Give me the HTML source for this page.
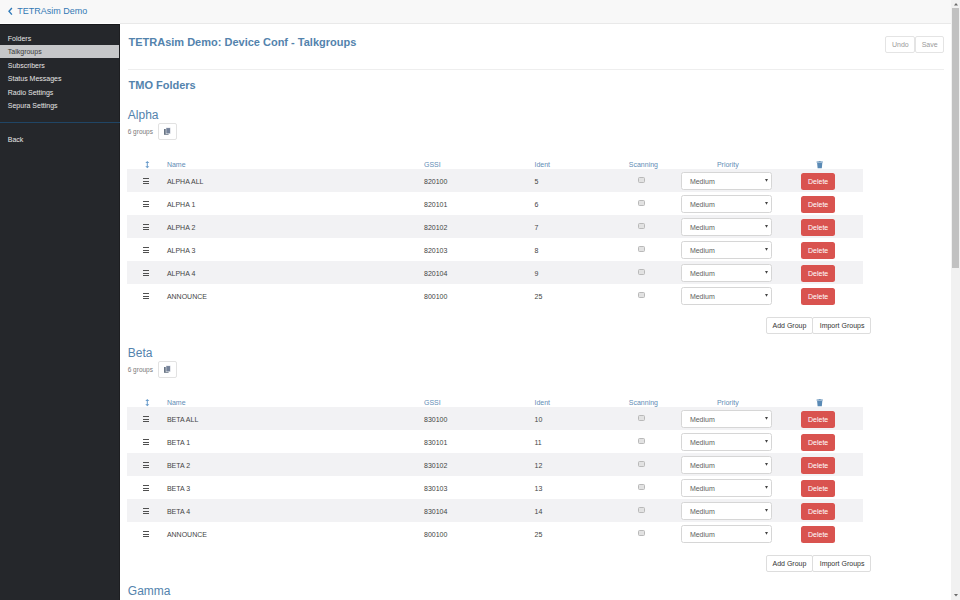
<!DOCTYPE html>
<html><head><meta charset="utf-8"><style>
html,body{margin:0;padding:0;width:960px;height:600px;overflow:hidden;background:#fff;}
body{position:relative;font-family:"Liberation Sans", sans-serif;}
.t{position:absolute;white-space:nowrap;}
.r{position:absolute;}
</style></head><body>
<div class="r" style="left:0.00px;top:0.00px;width:951.00px;height:23.00px;background:#f8f8f8"></div>
<div class="r" style="left:120.00px;top:23.00px;width:831.00px;height:1.00px;background:#e9e9e9"></div>
<svg class="r" style="left:7px;top:6.8px" width="7" height="9" viewBox="0 0 7 9"><path d="M4.9 1 L2 4.3 L4.9 7.6" stroke="#2f7ab9" stroke-width="1.4" fill="none"/></svg>
<div class="t" style="left:17.20px;top:7.38px;font-size:9px;line-height:9px;color:#3479b5;">TETRAsim Demo</div>
<div class="r" style="left:0.00px;top:24.00px;width:120.00px;height:576.00px;background:#25272b;border-top:1px solid #17181b;border-right:1px solid #1d1e21;box-sizing:border-box"></div>
<div class="t" style="left:7.80px;top:34.87px;font-size:7px;line-height:7px;color:#e6e6e6;">Folders</div>
<div class="r" style="left:0.00px;top:44.90px;width:119.00px;height:13.50px;background:#c6c7c9"></div>
<div class="t" style="left:7.80px;top:48.17px;font-size:7px;line-height:7px;color:#3a3a3a;">Talkgroups</div>
<div class="t" style="left:7.80px;top:61.87px;font-size:7px;line-height:7px;color:#e6e6e6;">Subscribers</div>
<div class="t" style="left:7.80px;top:75.37px;font-size:7px;line-height:7px;color:#e6e6e6;">Status Messages</div>
<div class="t" style="left:7.80px;top:88.87px;font-size:7px;line-height:7px;color:#e6e6e6;">Radio Settings</div>
<div class="t" style="left:7.80px;top:102.37px;font-size:7px;line-height:7px;color:#e6e6e6;">Sepura Settings</div>
<div class="r" style="left:0.00px;top:121.50px;width:120.00px;height:1.00px;background:#204565"></div>
<div class="t" style="left:7.80px;top:135.87px;font-size:7px;line-height:7px;color:#e6e6e6;">Back</div>
<div class="t" style="left:128.50px;top:36.69px;font-size:11px;line-height:11px;color:#5383ad;font-weight:bold;">TETRAsim Demo: Device Conf - Talkgroups</div>
<div class="r" style="left:885.00px;top:36.30px;width:30.00px;height:16.30px;background:#fff;border:1px solid #e4e4e4;border-radius:2px;box-sizing:border-box"></div>
<div class="t" style="left:892.00px;top:41.07px;font-size:7px;line-height:7px;color:#9a9a9a;">Undo</div>
<div class="r" style="left:914.50px;top:36.30px;width:29.10px;height:16.30px;background:#fff;border:1px solid #e4e4e4;border-radius:2px;box-sizing:border-box"></div>
<div class="t" style="left:921.70px;top:41.07px;font-size:7px;line-height:7px;color:#9a9a9a;">Save</div>
<div class="r" style="left:128.00px;top:68.50px;width:816.00px;height:1.00px;background:#eeeeee"></div>
<div class="t" style="left:128.50px;top:80.09px;font-size:11px;line-height:11px;color:#5383ad;font-weight:bold;">TMO Folders</div>
<div class="t" style="left:127.80px;top:109.04px;font-size:12px;line-height:12px;color:#5383ad;">Alpha</div>
<div class="t" style="left:127.70px;top:129.10px;font-size:6.5px;line-height:6.5px;color:#7a7a7a;">6 groups</div>
<div class="r" style="left:158.30px;top:123.20px;width:18.40px;height:16.90px;background:#fff;border:1px solid #e2e2e2;border-radius:2px;box-sizing:border-box"></div>
<svg class="r" style="left:163px;top:127px" width="9" height="9" viewBox="0 0 9 9"><rect x="1" y="2" width="4.6" height="5.8" fill="#687484"/><rect x="3" y="0.8" width="4.4" height="6" fill="#76839a" stroke="#fff" stroke-width="0.5"/></svg>
<svg class="r" style="left:145px;top:160.8px" width="5" height="8" viewBox="0 0 5 8"><path d="M2.3 0 L4.3 2.1 L2.8 2.1 L2.8 5.3 L4.3 5.3 L2.3 7.2 L0.3 5.3 L1.8 5.3 L1.8 2.1 L0.3 2.1 Z" fill="#6a9ccb"/></svg>
<div class="t" style="left:166.90px;top:161.07px;font-size:7px;line-height:7px;color:#5f8db6;">Name</div>
<div class="t" style="left:424.00px;top:161.07px;font-size:7px;line-height:7px;color:#5f8db6;">GSSI</div>
<div class="t" style="left:534.50px;top:161.07px;font-size:7px;line-height:7px;color:#5f8db6;">Ident</div>
<div class="t" style="left:628.80px;top:161.07px;font-size:7px;line-height:7px;color:#5f8db6;">Scanning</div>
<div class="t" style="left:716.90px;top:161.07px;font-size:7px;line-height:7px;color:#5f8db6;">Priority</div>
<svg class="r" style="left:816px;top:160.5px" width="7.5" height="8" viewBox="0 0 7.5 8"><rect x="0.6" y="0.5" width="6.2" height="1.1" fill="#5a8ab5"/><rect x="2.7" y="0" width="2" height="0.7" fill="#5a8ab5"/><path d="M1.1 1.9 L6.3 1.9 L5.8 7.2 L1.6 7.2 Z" fill="#5a8ab5"/></svg>
<div class="r" style="left:127.30px;top:169.00px;width:735.30px;height:23.00px;background:#f2f2f4"></div>
<div class="r" style="left:142.60px;top:178.30px;width:6.60px;height:0.90px;background:#505050"></div>
<div class="r" style="left:142.60px;top:180.80px;width:6.60px;height:0.90px;background:#505050"></div>
<div class="r" style="left:142.60px;top:183.30px;width:6.60px;height:0.90px;background:#505050"></div>
<div class="t" style="left:166.90px;top:177.67px;font-size:7px;line-height:7px;color:#444444;">ALPHA ALL</div>
<div class="t" style="left:424.00px;top:177.67px;font-size:7px;line-height:7px;color:#444444;">820100</div>
<div class="t" style="left:534.50px;top:177.67px;font-size:7px;line-height:7px;color:#444444;">5</div>
<div class="r" style="left:638.00px;top:177.40px;width:6.80px;height:5.80px;background:#e2e2e2;border:1px solid #b9b9b9;border-radius:1.5px;box-sizing:border-box"></div>
<div class="r" style="left:681.30px;top:172.10px;width:90.30px;height:17.50px;background:#fff;border:1px solid #d6d6d6;border-radius:2.5px;box-sizing:border-box"></div>
<div class="t" style="left:689.90px;top:177.67px;font-size:7px;line-height:7px;color:#606060;">Medium</div>
<svg class="r" style="left:765px;top:179.2px" width="3" height="3" viewBox="0 0 3 3"><path d="M0 0 L3 0 L1.5 2.8 Z" fill="#444"/></svg>
<div class="r" style="left:801.30px;top:173.20px;width:33.70px;height:16.70px;background:#d9534f;border-radius:2.5px"></div>
<div class="t" style="left:808.00px;top:177.67px;font-size:7px;line-height:7px;color:#fff;">Delete</div>
<div class="r" style="left:142.60px;top:201.30px;width:6.60px;height:0.90px;background:#505050"></div>
<div class="r" style="left:142.60px;top:203.80px;width:6.60px;height:0.90px;background:#505050"></div>
<div class="r" style="left:142.60px;top:206.30px;width:6.60px;height:0.90px;background:#505050"></div>
<div class="t" style="left:166.90px;top:200.67px;font-size:7px;line-height:7px;color:#444444;">ALPHA 1</div>
<div class="t" style="left:424.00px;top:200.67px;font-size:7px;line-height:7px;color:#444444;">820101</div>
<div class="t" style="left:534.50px;top:200.67px;font-size:7px;line-height:7px;color:#444444;">6</div>
<div class="r" style="left:638.00px;top:200.40px;width:6.80px;height:5.80px;background:#e2e2e2;border:1px solid #b9b9b9;border-radius:1.5px;box-sizing:border-box"></div>
<div class="r" style="left:681.30px;top:195.10px;width:90.30px;height:17.50px;background:#fff;border:1px solid #d6d6d6;border-radius:2.5px;box-sizing:border-box"></div>
<div class="t" style="left:689.90px;top:200.67px;font-size:7px;line-height:7px;color:#606060;">Medium</div>
<svg class="r" style="left:765px;top:202.2px" width="3" height="3" viewBox="0 0 3 3"><path d="M0 0 L3 0 L1.5 2.8 Z" fill="#444"/></svg>
<div class="r" style="left:801.30px;top:196.20px;width:33.70px;height:16.70px;background:#d9534f;border-radius:2.5px"></div>
<div class="t" style="left:808.00px;top:200.67px;font-size:7px;line-height:7px;color:#fff;">Delete</div>
<div class="r" style="left:127.30px;top:215.00px;width:735.30px;height:23.00px;background:#f2f2f4"></div>
<div class="r" style="left:142.60px;top:224.30px;width:6.60px;height:0.90px;background:#505050"></div>
<div class="r" style="left:142.60px;top:226.80px;width:6.60px;height:0.90px;background:#505050"></div>
<div class="r" style="left:142.60px;top:229.30px;width:6.60px;height:0.90px;background:#505050"></div>
<div class="t" style="left:166.90px;top:223.67px;font-size:7px;line-height:7px;color:#444444;">ALPHA 2</div>
<div class="t" style="left:424.00px;top:223.67px;font-size:7px;line-height:7px;color:#444444;">820102</div>
<div class="t" style="left:534.50px;top:223.67px;font-size:7px;line-height:7px;color:#444444;">7</div>
<div class="r" style="left:638.00px;top:223.40px;width:6.80px;height:5.80px;background:#e2e2e2;border:1px solid #b9b9b9;border-radius:1.5px;box-sizing:border-box"></div>
<div class="r" style="left:681.30px;top:218.10px;width:90.30px;height:17.50px;background:#fff;border:1px solid #d6d6d6;border-radius:2.5px;box-sizing:border-box"></div>
<div class="t" style="left:689.90px;top:223.67px;font-size:7px;line-height:7px;color:#606060;">Medium</div>
<svg class="r" style="left:765px;top:225.2px" width="3" height="3" viewBox="0 0 3 3"><path d="M0 0 L3 0 L1.5 2.8 Z" fill="#444"/></svg>
<div class="r" style="left:801.30px;top:219.20px;width:33.70px;height:16.70px;background:#d9534f;border-radius:2.5px"></div>
<div class="t" style="left:808.00px;top:223.67px;font-size:7px;line-height:7px;color:#fff;">Delete</div>
<div class="r" style="left:142.60px;top:247.30px;width:6.60px;height:0.90px;background:#505050"></div>
<div class="r" style="left:142.60px;top:249.80px;width:6.60px;height:0.90px;background:#505050"></div>
<div class="r" style="left:142.60px;top:252.30px;width:6.60px;height:0.90px;background:#505050"></div>
<div class="t" style="left:166.90px;top:246.67px;font-size:7px;line-height:7px;color:#444444;">ALPHA 3</div>
<div class="t" style="left:424.00px;top:246.67px;font-size:7px;line-height:7px;color:#444444;">820103</div>
<div class="t" style="left:534.50px;top:246.67px;font-size:7px;line-height:7px;color:#444444;">8</div>
<div class="r" style="left:638.00px;top:246.40px;width:6.80px;height:5.80px;background:#e2e2e2;border:1px solid #b9b9b9;border-radius:1.5px;box-sizing:border-box"></div>
<div class="r" style="left:681.30px;top:241.10px;width:90.30px;height:17.50px;background:#fff;border:1px solid #d6d6d6;border-radius:2.5px;box-sizing:border-box"></div>
<div class="t" style="left:689.90px;top:246.67px;font-size:7px;line-height:7px;color:#606060;">Medium</div>
<svg class="r" style="left:765px;top:248.2px" width="3" height="3" viewBox="0 0 3 3"><path d="M0 0 L3 0 L1.5 2.8 Z" fill="#444"/></svg>
<div class="r" style="left:801.30px;top:242.20px;width:33.70px;height:16.70px;background:#d9534f;border-radius:2.5px"></div>
<div class="t" style="left:808.00px;top:246.67px;font-size:7px;line-height:7px;color:#fff;">Delete</div>
<div class="r" style="left:127.30px;top:261.00px;width:735.30px;height:23.00px;background:#f2f2f4"></div>
<div class="r" style="left:142.60px;top:270.30px;width:6.60px;height:0.90px;background:#505050"></div>
<div class="r" style="left:142.60px;top:272.80px;width:6.60px;height:0.90px;background:#505050"></div>
<div class="r" style="left:142.60px;top:275.30px;width:6.60px;height:0.90px;background:#505050"></div>
<div class="t" style="left:166.90px;top:269.67px;font-size:7px;line-height:7px;color:#444444;">ALPHA 4</div>
<div class="t" style="left:424.00px;top:269.67px;font-size:7px;line-height:7px;color:#444444;">820104</div>
<div class="t" style="left:534.50px;top:269.67px;font-size:7px;line-height:7px;color:#444444;">9</div>
<div class="r" style="left:638.00px;top:269.40px;width:6.80px;height:5.80px;background:#e2e2e2;border:1px solid #b9b9b9;border-radius:1.5px;box-sizing:border-box"></div>
<div class="r" style="left:681.30px;top:264.10px;width:90.30px;height:17.50px;background:#fff;border:1px solid #d6d6d6;border-radius:2.5px;box-sizing:border-box"></div>
<div class="t" style="left:689.90px;top:269.67px;font-size:7px;line-height:7px;color:#606060;">Medium</div>
<svg class="r" style="left:765px;top:271.2px" width="3" height="3" viewBox="0 0 3 3"><path d="M0 0 L3 0 L1.5 2.8 Z" fill="#444"/></svg>
<div class="r" style="left:801.30px;top:265.20px;width:33.70px;height:16.70px;background:#d9534f;border-radius:2.5px"></div>
<div class="t" style="left:808.00px;top:269.67px;font-size:7px;line-height:7px;color:#fff;">Delete</div>
<div class="r" style="left:142.60px;top:293.30px;width:6.60px;height:0.90px;background:#505050"></div>
<div class="r" style="left:142.60px;top:295.80px;width:6.60px;height:0.90px;background:#505050"></div>
<div class="r" style="left:142.60px;top:298.30px;width:6.60px;height:0.90px;background:#505050"></div>
<div class="t" style="left:166.90px;top:292.67px;font-size:7px;line-height:7px;color:#444444;">ANNOUNCE</div>
<div class="t" style="left:424.00px;top:292.67px;font-size:7px;line-height:7px;color:#444444;">800100</div>
<div class="t" style="left:534.50px;top:292.67px;font-size:7px;line-height:7px;color:#444444;">25</div>
<div class="r" style="left:638.00px;top:292.40px;width:6.80px;height:5.80px;background:#e2e2e2;border:1px solid #b9b9b9;border-radius:1.5px;box-sizing:border-box"></div>
<div class="r" style="left:681.30px;top:287.10px;width:90.30px;height:17.50px;background:#fff;border:1px solid #d6d6d6;border-radius:2.5px;box-sizing:border-box"></div>
<div class="t" style="left:689.90px;top:292.67px;font-size:7px;line-height:7px;color:#606060;">Medium</div>
<svg class="r" style="left:765px;top:294.2px" width="3" height="3" viewBox="0 0 3 3"><path d="M0 0 L3 0 L1.5 2.8 Z" fill="#444"/></svg>
<div class="r" style="left:801.30px;top:288.20px;width:33.70px;height:16.70px;background:#d9534f;border-radius:2.5px"></div>
<div class="t" style="left:808.00px;top:292.67px;font-size:7px;line-height:7px;color:#fff;">Delete</div>
<div class="r" style="left:766.30px;top:317.30px;width:46.50px;height:16.70px;background:#fff;border:1px solid #ddd;border-radius:2px;box-sizing:border-box"></div>
<div class="t" style="left:772.50px;top:321.57px;font-size:7px;line-height:7px;color:#333;">Add Group</div>
<div class="r" style="left:812.20px;top:317.30px;width:58.80px;height:16.70px;background:#fff;border:1px solid #ddd;border-radius:2px;box-sizing:border-box"></div>
<div class="t" style="left:819.70px;top:321.57px;font-size:7px;line-height:7px;color:#333;">Import Groups</div>
<div class="t" style="left:127.80px;top:347.04px;font-size:12px;line-height:12px;color:#5383ad;">Beta</div>
<div class="t" style="left:127.70px;top:367.10px;font-size:6.5px;line-height:6.5px;color:#7a7a7a;">6 groups</div>
<div class="r" style="left:158.30px;top:361.20px;width:18.40px;height:16.90px;background:#fff;border:1px solid #e2e2e2;border-radius:2px;box-sizing:border-box"></div>
<svg class="r" style="left:163px;top:365px" width="9" height="9" viewBox="0 0 9 9"><rect x="1" y="2" width="4.6" height="5.8" fill="#687484"/><rect x="3" y="0.8" width="4.4" height="6" fill="#76839a" stroke="#fff" stroke-width="0.5"/></svg>
<svg class="r" style="left:145px;top:398.8px" width="5" height="8" viewBox="0 0 5 8"><path d="M2.3 0 L4.3 2.1 L2.8 2.1 L2.8 5.3 L4.3 5.3 L2.3 7.2 L0.3 5.3 L1.8 5.3 L1.8 2.1 L0.3 2.1 Z" fill="#6a9ccb"/></svg>
<div class="t" style="left:166.90px;top:399.07px;font-size:7px;line-height:7px;color:#5f8db6;">Name</div>
<div class="t" style="left:424.00px;top:399.07px;font-size:7px;line-height:7px;color:#5f8db6;">GSSI</div>
<div class="t" style="left:534.50px;top:399.07px;font-size:7px;line-height:7px;color:#5f8db6;">Ident</div>
<div class="t" style="left:628.80px;top:399.07px;font-size:7px;line-height:7px;color:#5f8db6;">Scanning</div>
<div class="t" style="left:716.90px;top:399.07px;font-size:7px;line-height:7px;color:#5f8db6;">Priority</div>
<svg class="r" style="left:816px;top:398.5px" width="7.5" height="8" viewBox="0 0 7.5 8"><rect x="0.6" y="0.5" width="6.2" height="1.1" fill="#5a8ab5"/><rect x="2.7" y="0" width="2" height="0.7" fill="#5a8ab5"/><path d="M1.1 1.9 L6.3 1.9 L5.8 7.2 L1.6 7.2 Z" fill="#5a8ab5"/></svg>
<div class="r" style="left:127.30px;top:407.00px;width:735.30px;height:23.00px;background:#f2f2f4"></div>
<div class="r" style="left:142.60px;top:416.30px;width:6.60px;height:0.90px;background:#505050"></div>
<div class="r" style="left:142.60px;top:418.80px;width:6.60px;height:0.90px;background:#505050"></div>
<div class="r" style="left:142.60px;top:421.30px;width:6.60px;height:0.90px;background:#505050"></div>
<div class="t" style="left:166.90px;top:415.67px;font-size:7px;line-height:7px;color:#444444;">BETA ALL</div>
<div class="t" style="left:424.00px;top:415.67px;font-size:7px;line-height:7px;color:#444444;">830100</div>
<div class="t" style="left:534.50px;top:415.67px;font-size:7px;line-height:7px;color:#444444;">10</div>
<div class="r" style="left:638.00px;top:415.40px;width:6.80px;height:5.80px;background:#e2e2e2;border:1px solid #b9b9b9;border-radius:1.5px;box-sizing:border-box"></div>
<div class="r" style="left:681.30px;top:410.10px;width:90.30px;height:17.50px;background:#fff;border:1px solid #d6d6d6;border-radius:2.5px;box-sizing:border-box"></div>
<div class="t" style="left:689.90px;top:415.67px;font-size:7px;line-height:7px;color:#606060;">Medium</div>
<svg class="r" style="left:765px;top:417.2px" width="3" height="3" viewBox="0 0 3 3"><path d="M0 0 L3 0 L1.5 2.8 Z" fill="#444"/></svg>
<div class="r" style="left:801.30px;top:411.20px;width:33.70px;height:16.70px;background:#d9534f;border-radius:2.5px"></div>
<div class="t" style="left:808.00px;top:415.67px;font-size:7px;line-height:7px;color:#fff;">Delete</div>
<div class="r" style="left:142.60px;top:439.30px;width:6.60px;height:0.90px;background:#505050"></div>
<div class="r" style="left:142.60px;top:441.80px;width:6.60px;height:0.90px;background:#505050"></div>
<div class="r" style="left:142.60px;top:444.30px;width:6.60px;height:0.90px;background:#505050"></div>
<div class="t" style="left:166.90px;top:438.67px;font-size:7px;line-height:7px;color:#444444;">BETA 1</div>
<div class="t" style="left:424.00px;top:438.67px;font-size:7px;line-height:7px;color:#444444;">830101</div>
<div class="t" style="left:534.50px;top:438.67px;font-size:7px;line-height:7px;color:#444444;">11</div>
<div class="r" style="left:638.00px;top:438.40px;width:6.80px;height:5.80px;background:#e2e2e2;border:1px solid #b9b9b9;border-radius:1.5px;box-sizing:border-box"></div>
<div class="r" style="left:681.30px;top:433.10px;width:90.30px;height:17.50px;background:#fff;border:1px solid #d6d6d6;border-radius:2.5px;box-sizing:border-box"></div>
<div class="t" style="left:689.90px;top:438.67px;font-size:7px;line-height:7px;color:#606060;">Medium</div>
<svg class="r" style="left:765px;top:440.2px" width="3" height="3" viewBox="0 0 3 3"><path d="M0 0 L3 0 L1.5 2.8 Z" fill="#444"/></svg>
<div class="r" style="left:801.30px;top:434.20px;width:33.70px;height:16.70px;background:#d9534f;border-radius:2.5px"></div>
<div class="t" style="left:808.00px;top:438.67px;font-size:7px;line-height:7px;color:#fff;">Delete</div>
<div class="r" style="left:127.30px;top:453.00px;width:735.30px;height:23.00px;background:#f2f2f4"></div>
<div class="r" style="left:142.60px;top:462.30px;width:6.60px;height:0.90px;background:#505050"></div>
<div class="r" style="left:142.60px;top:464.80px;width:6.60px;height:0.90px;background:#505050"></div>
<div class="r" style="left:142.60px;top:467.30px;width:6.60px;height:0.90px;background:#505050"></div>
<div class="t" style="left:166.90px;top:461.67px;font-size:7px;line-height:7px;color:#444444;">BETA 2</div>
<div class="t" style="left:424.00px;top:461.67px;font-size:7px;line-height:7px;color:#444444;">830102</div>
<div class="t" style="left:534.50px;top:461.67px;font-size:7px;line-height:7px;color:#444444;">12</div>
<div class="r" style="left:638.00px;top:461.40px;width:6.80px;height:5.80px;background:#e2e2e2;border:1px solid #b9b9b9;border-radius:1.5px;box-sizing:border-box"></div>
<div class="r" style="left:681.30px;top:456.10px;width:90.30px;height:17.50px;background:#fff;border:1px solid #d6d6d6;border-radius:2.5px;box-sizing:border-box"></div>
<div class="t" style="left:689.90px;top:461.67px;font-size:7px;line-height:7px;color:#606060;">Medium</div>
<svg class="r" style="left:765px;top:463.2px" width="3" height="3" viewBox="0 0 3 3"><path d="M0 0 L3 0 L1.5 2.8 Z" fill="#444"/></svg>
<div class="r" style="left:801.30px;top:457.20px;width:33.70px;height:16.70px;background:#d9534f;border-radius:2.5px"></div>
<div class="t" style="left:808.00px;top:461.67px;font-size:7px;line-height:7px;color:#fff;">Delete</div>
<div class="r" style="left:142.60px;top:485.30px;width:6.60px;height:0.90px;background:#505050"></div>
<div class="r" style="left:142.60px;top:487.80px;width:6.60px;height:0.90px;background:#505050"></div>
<div class="r" style="left:142.60px;top:490.30px;width:6.60px;height:0.90px;background:#505050"></div>
<div class="t" style="left:166.90px;top:484.67px;font-size:7px;line-height:7px;color:#444444;">BETA 3</div>
<div class="t" style="left:424.00px;top:484.67px;font-size:7px;line-height:7px;color:#444444;">830103</div>
<div class="t" style="left:534.50px;top:484.67px;font-size:7px;line-height:7px;color:#444444;">13</div>
<div class="r" style="left:638.00px;top:484.40px;width:6.80px;height:5.80px;background:#e2e2e2;border:1px solid #b9b9b9;border-radius:1.5px;box-sizing:border-box"></div>
<div class="r" style="left:681.30px;top:479.10px;width:90.30px;height:17.50px;background:#fff;border:1px solid #d6d6d6;border-radius:2.5px;box-sizing:border-box"></div>
<div class="t" style="left:689.90px;top:484.67px;font-size:7px;line-height:7px;color:#606060;">Medium</div>
<svg class="r" style="left:765px;top:486.2px" width="3" height="3" viewBox="0 0 3 3"><path d="M0 0 L3 0 L1.5 2.8 Z" fill="#444"/></svg>
<div class="r" style="left:801.30px;top:480.20px;width:33.70px;height:16.70px;background:#d9534f;border-radius:2.5px"></div>
<div class="t" style="left:808.00px;top:484.67px;font-size:7px;line-height:7px;color:#fff;">Delete</div>
<div class="r" style="left:127.30px;top:499.00px;width:735.30px;height:23.00px;background:#f2f2f4"></div>
<div class="r" style="left:142.60px;top:508.30px;width:6.60px;height:0.90px;background:#505050"></div>
<div class="r" style="left:142.60px;top:510.80px;width:6.60px;height:0.90px;background:#505050"></div>
<div class="r" style="left:142.60px;top:513.30px;width:6.60px;height:0.90px;background:#505050"></div>
<div class="t" style="left:166.90px;top:507.67px;font-size:7px;line-height:7px;color:#444444;">BETA 4</div>
<div class="t" style="left:424.00px;top:507.67px;font-size:7px;line-height:7px;color:#444444;">830104</div>
<div class="t" style="left:534.50px;top:507.67px;font-size:7px;line-height:7px;color:#444444;">14</div>
<div class="r" style="left:638.00px;top:507.40px;width:6.80px;height:5.80px;background:#e2e2e2;border:1px solid #b9b9b9;border-radius:1.5px;box-sizing:border-box"></div>
<div class="r" style="left:681.30px;top:502.10px;width:90.30px;height:17.50px;background:#fff;border:1px solid #d6d6d6;border-radius:2.5px;box-sizing:border-box"></div>
<div class="t" style="left:689.90px;top:507.67px;font-size:7px;line-height:7px;color:#606060;">Medium</div>
<svg class="r" style="left:765px;top:509.2px" width="3" height="3" viewBox="0 0 3 3"><path d="M0 0 L3 0 L1.5 2.8 Z" fill="#444"/></svg>
<div class="r" style="left:801.30px;top:503.20px;width:33.70px;height:16.70px;background:#d9534f;border-radius:2.5px"></div>
<div class="t" style="left:808.00px;top:507.67px;font-size:7px;line-height:7px;color:#fff;">Delete</div>
<div class="r" style="left:142.60px;top:531.30px;width:6.60px;height:0.90px;background:#505050"></div>
<div class="r" style="left:142.60px;top:533.80px;width:6.60px;height:0.90px;background:#505050"></div>
<div class="r" style="left:142.60px;top:536.30px;width:6.60px;height:0.90px;background:#505050"></div>
<div class="t" style="left:166.90px;top:530.67px;font-size:7px;line-height:7px;color:#444444;">ANNOUNCE</div>
<div class="t" style="left:424.00px;top:530.67px;font-size:7px;line-height:7px;color:#444444;">800100</div>
<div class="t" style="left:534.50px;top:530.67px;font-size:7px;line-height:7px;color:#444444;">25</div>
<div class="r" style="left:638.00px;top:530.40px;width:6.80px;height:5.80px;background:#e2e2e2;border:1px solid #b9b9b9;border-radius:1.5px;box-sizing:border-box"></div>
<div class="r" style="left:681.30px;top:525.10px;width:90.30px;height:17.50px;background:#fff;border:1px solid #d6d6d6;border-radius:2.5px;box-sizing:border-box"></div>
<div class="t" style="left:689.90px;top:530.67px;font-size:7px;line-height:7px;color:#606060;">Medium</div>
<svg class="r" style="left:765px;top:532.2px" width="3" height="3" viewBox="0 0 3 3"><path d="M0 0 L3 0 L1.5 2.8 Z" fill="#444"/></svg>
<div class="r" style="left:801.30px;top:526.20px;width:33.70px;height:16.70px;background:#d9534f;border-radius:2.5px"></div>
<div class="t" style="left:808.00px;top:530.67px;font-size:7px;line-height:7px;color:#fff;">Delete</div>
<div class="r" style="left:766.30px;top:555.30px;width:46.50px;height:16.70px;background:#fff;border:1px solid #ddd;border-radius:2px;box-sizing:border-box"></div>
<div class="t" style="left:772.50px;top:559.57px;font-size:7px;line-height:7px;color:#333;">Add Group</div>
<div class="r" style="left:812.20px;top:555.30px;width:58.80px;height:16.70px;background:#fff;border:1px solid #ddd;border-radius:2px;box-sizing:border-box"></div>
<div class="t" style="left:819.70px;top:559.57px;font-size:7px;line-height:7px;color:#333;">Import Groups</div>
<div class="t" style="left:127.80px;top:585.04px;font-size:12px;line-height:12px;color:#5383ad;">Gamma</div>
<div class="r" style="left:951.00px;top:0.00px;width:9.00px;height:600.00px;background:#f1f1f1"></div>
<div class="r" style="left:952.20px;top:8.20px;width:6.80px;height:259.60px;background:#c1c1c1"></div>
<svg class="r" style="left:953.8px;top:3.4px" width="4" height="3" viewBox="0 0 4 3"><path d="M0 2.6 L4 2.6 L2 0 Z" fill="#6a6a6a"/></svg>
<svg class="r" style="left:953.8px;top:593.6px" width="4" height="3" viewBox="0 0 4 3"><path d="M0 0 L4 0 L2 2.6 Z" fill="#6a6a6a"/></svg>
</body></html>
